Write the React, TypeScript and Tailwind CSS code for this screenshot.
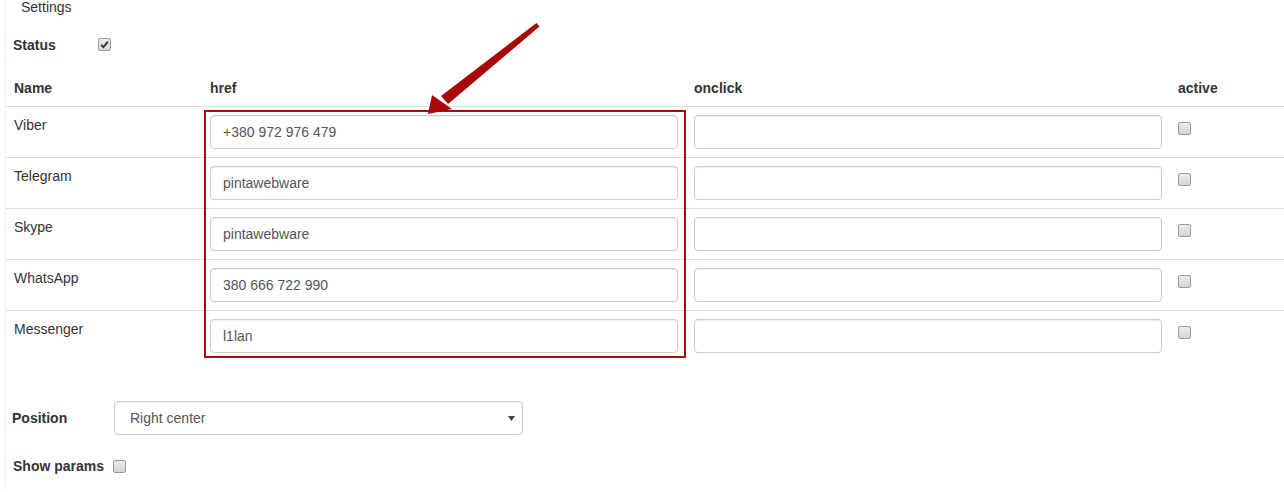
import React from "react";

const font = { fontFamily: '"Liberation Sans", Arial, Helvetica, sans-serif' };

function Box({ checked = false, className = "" }: { checked?: boolean; className?: string }) {
  return (
    <span
      className={`inline-flex h-[13px] w-[13px] items-center justify-center rounded-[2px] border border-[#9a9a9a] bg-gradient-to-b from-[#ececec] to-[#d4d4d4] ${className}`}
    >
      {checked && (
        <svg width="9" height="9" viewBox="0 0 9 9">
          <path d="M1.2 4.8 L3.4 7 L7.9 1.6" fill="none" stroke="#333" strokeWidth="1.9" />
        </svg>
      )}
    </span>
  );
}

const rows = [
  { name: "Viber", href: "+380 972 976 479" },
  { name: "Telegram", href: "pintawebware" },
  { name: "Skype", href: "pintawebware" },
  { name: "WhatsApp", href: "380 666 722 990" },
  { name: "Messenger", href: "l1lan" },
];

function Input({ value }: { value?: string }) {
  return (
    <div className="flex h-[34px] w-full items-center rounded-[4px] border border-[#ccc] px-[12px] text-[14px] text-[#555] shadow-[inset_0_1px_1px_rgba(0,0,0,0.075)]">
      {value}
    </div>
  );
}

export default function App() {
  return (
    <div className="relative h-[492px] w-[1284px] overflow-hidden bg-white text-[14px] text-[#333]" style={font}>
      <div className="ml-[5px] h-full border-l border-[#f2f2f2]">
        <div className="-mt-[3px] h-[20px] pl-[15px] leading-[20px]">Settings</div>

        <div className="mt-[18px] flex h-[20px] items-center">
          <span className="w-[86px] pl-[7px] font-bold">Status</span>
          <Box checked className="mt-[-1px] ml-[6px]" />
        </div>

        <div className="mt-[15px]">
          <div className="grid grid-cols-[196px_484px_484px_109px] border-b border-[#ddd] font-bold leading-[20px]">
            <div className="px-2 py-2">Name</div>
            <div className="px-2 py-2">href</div>
            <div className="px-2 py-2">onclick</div>
            <div className="px-2 py-2">active</div>
          </div>
          {rows.map((r, i) => (
            <div
              key={r.name}
              className={`grid grid-cols-[196px_484px_484px_109px] leading-[20px] ${i > 0 ? "border-t border-[#ddd]" : ""}`}
            >
              <div className="px-2 py-2">{r.name}</div>
              <div className="px-2 py-2">
                <Input value={r.href} />
              </div>
              <div className="px-2 py-2">
                <Input />
              </div>
              <div className="px-2 py-2">
                <Box className="mt-[7px]" />
              </div>
            </div>
          ))}
        </div>

        <div className="mt-[40px] flex h-[34px] items-center">
          <span className="w-[108px] pl-[6px] font-bold">Position</span>
          <div className="flex h-[34px] w-[409px] items-center justify-between rounded-[4px] border border-[#ccc] pl-[15px] pr-[7px] text-[#555] shadow-[inset_0_1px_1px_rgba(0,0,0,0.075)]">
            <span>Right center</span>
            <svg width="7" height="5" viewBox="0 0 7 5">
              <path d="M0 0 L7 0 L3.5 5 Z" fill="#444" />
            </svg>
          </div>
        </div>

        <div className="mt-[21px] flex h-[20px] items-center">
          <span className="pl-[7px] font-bold">Show params</span>
          <Box className="ml-[9px]" />
        </div>
      </div>

      {/* annotation: red frame */}
      <div className="absolute left-[204px] top-[110px] h-[248px] w-[482px] border-2 border-[#a30d0d]" />
      {/* annotation: arrow */}
      <svg className="absolute left-0 top-0" width="1284" height="492" viewBox="0 0 1284 492">
        <polygon points="536.5,23 539.5,26.5 448,104 441,96" fill="#a80808" />
        <polygon points="428,114 432,95 452,109" fill="#a80808" />
      </svg>
    </div>
  );
}
